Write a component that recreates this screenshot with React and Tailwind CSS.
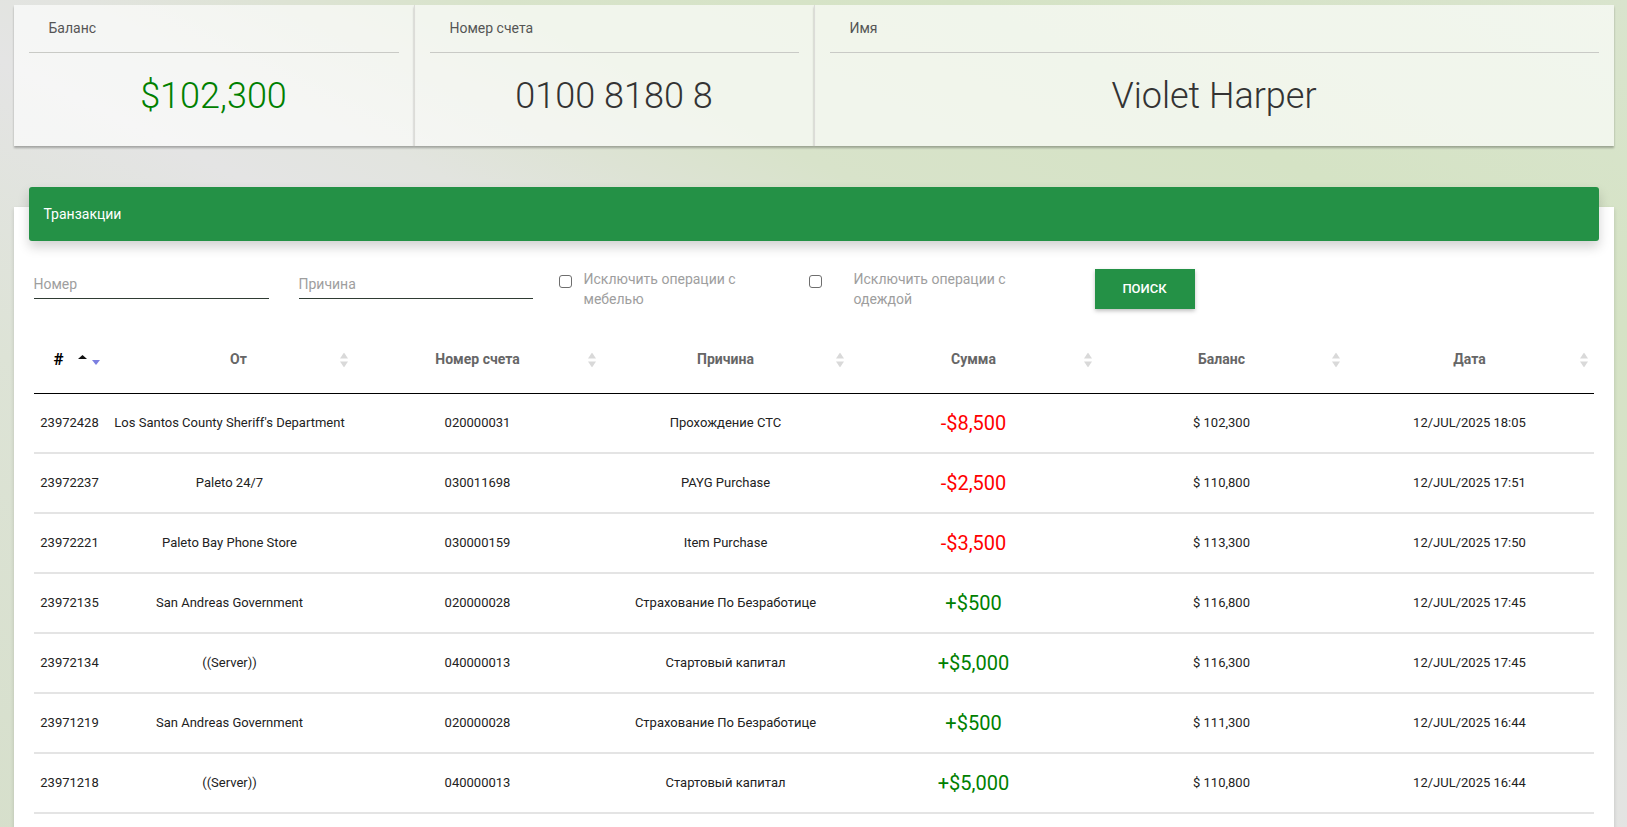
import React from "react";

const rows = [
  { id: "23972428", from: "Los Santos County Sheriff's Department", acc: "020000031", reason: "Прохождение СТС", sum: "-$8,500", bal: "$ 102,300", date: "12/JUL/2025 18:05" },
  { id: "23972237", from: "Paleto 24/7", acc: "030011698", reason: "PAYG Purchase", sum: "-$2,500", bal: "$ 110,800", date: "12/JUL/2025 17:51" },
  { id: "23972221", from: "Paleto Bay Phone Store", acc: "030000159", reason: "Item Purchase", sum: "-$3,500", bal: "$ 113,300", date: "12/JUL/2025 17:50" },
  { id: "23972135", from: "San Andreas Government", acc: "020000028", reason: "Страхование По Безработице", sum: "+$500", bal: "$ 116,800", date: "12/JUL/2025 17:45" },
  { id: "23972134", from: "((Server))", acc: "040000013", reason: "Стартовый капитал", sum: "+$5,000", bal: "$ 116,300", date: "12/JUL/2025 17:45" },
  { id: "23971219", from: "San Andreas Government", acc: "020000028", reason: "Страхование По Безработице", sum: "+$500", bal: "$ 111,300", date: "12/JUL/2025 16:44" },
  { id: "23971218", from: "((Server))", acc: "040000013", reason: "Стартовый капитал", sum: "+$5,000", bal: "$ 110,800", date: "12/JUL/2025 16:44" },
];

function SortIcon() {
  return (
    <svg className="absolute right-[6px] top-1/2 -translate-y-1/2" width="8" height="15" viewBox="0 0 8 15">
      <path d="M4 0 L8 6 L0 6 Z" fill="#d9d9d9" />
      <path d="M0 9 L8 9 L4 15 Z" fill="#d9d9d9" />
    </svg>
  );
}

function StatCard({ label, children, className = "" }) {
  return (
    <div className={`h-[141px] bg-white/65 px-[15px] shadow-[0_2px_2px_rgba(0,0,0,0.28)] ${className}`}>
      <div className="h-[48px] border-b border-[#c9cac6] pl-[20px] pt-[13px] text-[14px] leading-[20px] text-[#555]">
        {label}
      </div>
      <div className="flex h-[92px] items-center justify-center pb-[6px]">{children}</div>
    </div>
  );
}

function Checkbox({ label, className = "" }) {
  return (
    <div className={`flex items-start ${className}`}>
      <span className="mt-[6px] h-[13px] w-[13px] shrink-0 rounded-[3px] border border-[#6e6e6e] bg-white" />
      {label}
    </div>
  );
}

export default function App() {
  return (
    <div className="min-h-screen bg-[linear-gradient(26deg,#d6dfcb_0%,#dde3d6_30%,#e4e4e4_48%,#e2e4df_54%,#dde3d4_60%,#d8e3ca_66%,#d5e3c5_80%,#d9e4cd_100%)] font-['Roboto',sans-serif]">
      <div className="mx-auto w-[1600px] pt-[5px]">
        <div className="grid grid-cols-[400px_400px_800px]">
          <StatCard label="Баланс">
            <span className="text-[36px] font-light text-[#008000]">$102,300</span>
          </StatCard>
          <StatCard label="Номер счета" className="border-l border-[#dcdcd8]">
            <span className="text-[36px] font-light text-[#333]">0100 8180 8</span>
          </StatCard>
          <StatCard label="Имя" className="border-l border-[#dcdcd8]">
            <span className="text-[36px] font-light text-[#333]">Violet Harper</span>
          </StatCard>
        </div>

        <div className="mt-[61px] flow-root min-h-[640px] bg-white px-[20px] pb-[20px] shadow-[0_2px_4px_rgba(0,0,0,0.15)]">
          <div className="-mx-[5px] -mt-[20px] flex h-[54px] items-center rounded-[3px] bg-[#249146] pl-[15px] text-[14px] text-white shadow-[0_6px_12px_rgba(0,0,0,0.18)]">
            Транзакции
          </div>

          <div className="mt-[28px] flex h-[40px] items-start">
            <input
              placeholder="Номер"
              className="h-[30px] w-[235px] border-b border-[#2f3b33] bg-transparent text-[14px] text-[#333] outline-none placeholder:text-[#9e9e9e]"
            />
            <input
              placeholder="Причина"
              className="ml-[30px] h-[30px] w-[234px] border-b border-[#2f3b33] bg-transparent text-[14px] text-[#333] outline-none placeholder:text-[#9e9e9e]"
            />
            <Checkbox
              className="ml-[26px]"
              label={<span className="ml-[12px] w-[170px] text-[14px] leading-[20px] text-[#9e9e9e]">Исключить операции с мебелью</span>}
            />
            <Checkbox
              className="ml-[55px]"
              label={<span className="ml-[32px] w-[170px] text-[14px] leading-[20px] text-[#9e9e9e]">Исключить операции с одеждой</span>}
            />
            <button className="ml-[71px] h-[40px] w-[100px] bg-[#249146] text-[13px] font-medium uppercase text-white shadow-[0_2px_4px_rgba(0,0,0,0.25)]">
              Поиск
            </button>
          </div>

          <table className="mt-[18px] w-full table-fixed border-collapse">
            <colgroup>
              <col className="w-[72px]" />
              <col className="w-[248px]" />
              <col className="w-[248px]" />
              <col className="w-[248px]" />
              <col className="w-[248px]" />
              <col className="w-[248px]" />
              <col className="w-[248px]" />
            </colgroup>
            <thead>
              <tr className="h-[66px] border-b border-black text-[14px] font-bold text-[#666]">
                <th className="text-left">
                  <div className="flex items-center pl-[20px]">
                    <span className="text-[17px] text-black">#</span>
                    <svg className="ml-[14px]" width="23" height="12" viewBox="0 0 23 12">
                      <path d="M4.5 1 L9 5 L0 5 Z" fill="#111" />
                      <path d="M14 6 L22 6 L18 11 Z" fill="#7b7fe0" />
                    </svg>
                  </div>
                </th>
                <th className="relative pl-[18px]">От<SortIcon /></th>
                <th className="relative">Номер счета<SortIcon /></th>
                <th className="relative">Причина<SortIcon /></th>
                <th className="relative">Сумма<SortIcon /></th>
                <th className="relative">Баланс<SortIcon /></th>
                <th className="relative">Дата<SortIcon /></th>
              </tr>
            </thead>
            <tbody>
              {rows.map((r) => (
                <tr key={r.id} className="h-[60px] border-b-2 border-[#e4e4e4] text-center text-[13px] text-[#222]">
                  <td>{r.id}</td>
                  <td className="whitespace-nowrap px-[4px]">{r.from}</td>
                  <td>{r.acc}</td>
                  <td className="whitespace-nowrap">{r.reason}</td>
                  <td className={`text-[20px] ${r.sum.startsWith("-") ? "text-[#ff0000]" : "text-[#008000]"}`}>{r.sum}</td>
                  <td>{r.bal}</td>
                  <td>{r.date}</td>
                </tr>
              ))}
            </tbody>
          </table>
        </div>
      </div>
    </div>
  );
}
